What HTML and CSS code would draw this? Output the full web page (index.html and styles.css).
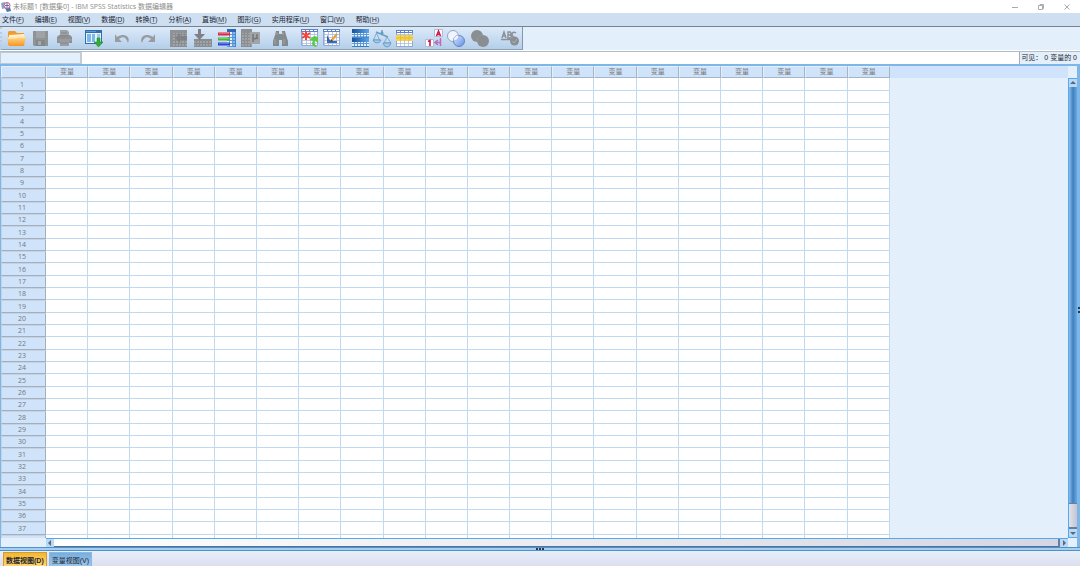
FILE: index.html
```html
<!DOCTYPE html>
<html lang="zh-CN">
<head>
<meta charset="utf-8">
<title>未标题1 [数据集0] - IBM SPSS Statistics 数据编辑器</title>
<link rel="stylesheet" href="styles.css">
</head>
<body>
<svg class="defs" aria-hidden="true">
  <defs>
    <linearGradient id="gold" x1="0" y1="0" x2="0" y2="1"><stop offset="0" stop-color="#ffe09a"/><stop offset="1" stop-color="#f8941d"/></linearGradient>
    <linearGradient id="blue" x1="0" y1="0" x2="1" y2="0"><stop offset="0" stop-color="#1c4f97"/><stop offset="1" stop-color="#5da5e8"/></linearGradient>
    <linearGradient id="ball" x1="0" y1="0" x2="1" y2="1"><stop offset="0" stop-color="#dce9ff"/><stop offset="1" stop-color="#5c8ee8"/></linearGradient>
    <pattern id="cells" width="4" height="3" patternUnits="userSpaceOnUse"><rect width="4" height="3" fill="#fff"/><path d="M0 .5h4M.5 0v3" stroke="#a9bbdd" stroke-width=".8"/></pattern>
    <pattern id="cellsBlue" width="3" height="3" patternUnits="userSpaceOnUse"><rect width="3" height="3" fill="#e4f2ff"/><path d="M0 .5h3M.5 0v3" stroke="#5b9bdb"/></pattern>
    <pattern id="cellsGray" width="3" height="3" patternUnits="userSpaceOnUse"><rect width="3" height="3" fill="#a0a3a6"/><path d="M0 .5h3M.5 0v3" stroke="#8a8d90"/></pattern>
  </defs>
</svg>

<header class="titlebar">
  <svg class="app-icon" viewBox="0 0 11 11" aria-hidden="true"><path d="M0 2l4-1 1 6-4 1z" fill="#8aa6d0"/><path d="M4 7l5-1 1 4-4 1z" fill="#4977b5"/><circle cx="6" cy="4.500" r="3" fill="#fff" stroke="#c8557a"/><path d="M6 2v5M4 4.500h4" stroke="#5273b5"/></svg>
  <h1>未标题1 [数据集0] - IBM SPSS Statistics 数据编辑器</h1>
  <div class="window-buttons">
    <button aria-label="最小化"><svg viewBox="0 0 8 8"><path d="M1 4.500h6"/></svg></button>
    <button aria-label="还原"><svg viewBox="0 0 8 8"><path d="M1.500 2.500h4v4h-4zM3 2.500v-1h3.500v4h-1"/></svg></button>
    <button aria-label="关闭"><svg viewBox="0 0 8 8"><path d="M1.500 1.500l5 5M6.500 1.500l-5 5"/></svg></button>
  </div>
</header>

<nav class="menubar">
  <button>文件(<u>F</u>)</button><button>编辑(<u>E</u>)</button><button>视图(<u>V</u>)</button><button>数据(<u>D</u>)</button><button>转换(<u>T</u>)</button><button>分析(<u>A</u>)</button><button>直销(<u>M</u>)</button><button>图形(<u>G</u>)</button><button>实用程序(<u>U</u>)</button><button>窗口(<u>W</u>)</button><button>帮助(<u>H</u>)</button>
</nav>

<div class="toolbar-row">
  <div class="toolbar" role="toolbar">
    <div class="group">
      <button aria-label="打开"><svg viewBox="0 0 24 22"><path d="M4 17V4l1-1h6l2 2h7v11z" fill="#f39a2b"/><path d="M5 7l15-1v5H5z" fill="#fff3d5"/><path d="M3 9h9l2-1h8l-2 10H5z" fill="url(#gold)"/><path d="M4 10h8l2-1h7" stroke="#fff0c4" fill="none"/></svg></button>
      <button aria-label="保存"><svg viewBox="0 0 24 22"><path d="M5 3h15v15H6l-1-1z" fill="#909396"/><path d="M8 3h9v7H8z" fill="#a0a3a6"/><path d="M8 12h9v6H8z" fill="#84878a"/><path d="M10 13h3v4h-3z" fill="#a6a9ac"/></svg></button>
      <button aria-label="打印"><svg viewBox="0 0 24 22"><path d="M8 2h7l2 2v5H8z" fill="#a0a3a6"/><path d="M7 7h11l2 2v6H5V9z" fill="#8e9194"/><path d="M8 13h9v5H8z" fill="#9b9ea1"/><path d="M8 8h8M8 15h8M9 5h6" stroke="#83868a"/><path d="M6 12h13" stroke="#a3a6a9"/></svg></button>
    </div>
    <div class="group">
      <button aria-label="重新调用对话框"><svg viewBox="0 0 24 22"><path d="M3 2h17v14H3z" fill="#2f6fae"/><path d="M4 5h15v10H4z" fill="#e6f3ff"/><path d="M5 6h4v8H5zM10 6h3v8h-3z" fill="#7db8e8"/><path d="M15 7h3M15 9h3" stroke="#5b97cf"/><path d="M4 3.500h10" stroke="#5a9bd6"/><path d="M15 10h3v4h3l-4.500 5L12 14h3z" fill="#35ad35" stroke="#16851f" stroke-width=".5"/></svg></button>
    </div>
    <div class="group">
      <button aria-label="撤消"><svg viewBox="0 0 24 22"><path d="M3 6v8h7L7 11c4-3 7-2 9 4 3-6-3-11-11-6z" fill="#979ca1"/></svg></button>
      <button aria-label="重做"><svg viewBox="0 0 24 22"><path d="M19 6v8h-7l3-3c-4-3-7-2-9 4-3-6 3-11 11-6z" fill="#979ca1"/></svg></button>
    </div>
    <div class="group">
      <button aria-label="转到个案"><svg viewBox="0 0 24 22"><path d="M4 2h17v17H4z" fill="url(#cellsGray)"/><path d="M4 2h17v3H4zM4 2h3v17H4z" fill="#8f9295"/><path d="M9 10l5-5v3h7v4h-7v3z" fill="#7f8285"/></svg></button>
      <button aria-label="转到变量"><svg viewBox="0 0 24 22"><path d="M4 11h18v8H4z" fill="url(#cellsGray)"/><path d="M4 11h18v2H4z" fill="#8a8d90"/><path d="M8 1h3v5h4l-5.500 6L4 6h4z" fill="#7f8285"/></svg></button>
      <button aria-label="变量"><svg viewBox="0 0 24 22"><path d="M13 1h9v18h-9z" fill="url(#cellsBlue)"/><path d="M13 1h9v3h-9z" fill="#2d68b4"/><path d="M19 4v15h3V4z" fill="#3277c1" fill-opacity=".5"/><path d="M4 6h12" stroke="#e02749" stroke-width="3"/><path d="M4 11h12" stroke="#42ba38" stroke-width="3"/><path d="M4 16h12" stroke="#3146d1" stroke-width="3"/><path d="M5 5.500h10M5 10.500h10M5 15.500h10" stroke="#fff" stroke-opacity=".25"/></svg></button>
      <button aria-label="运行描述统计"><svg viewBox="0 0 24 22"><path d="M3 1h11v18H3z" fill="url(#cellsGray)"/><path d="M3 1h11v4H3z" fill="#8d9093"/><path d="M12 4h10v12H12z" fill="#a2a5a8"/><path d="M15 6v8M15 10q2 2 4-1V6M19 10l1 1" fill="none" stroke="#74777a" stroke-width="1.500"/></svg></button>
    </div>
    <div class="group">
      <button aria-label="查找"><svg viewBox="0 0 24 22"><path d="M8 3h3v3h3V3h3l1 4 2 6v5h-6v-6h-3v6H5v-5l2-6z" fill="#84898e"/><path d="M7 11v5M16 11v5M9 4v3M15 4v3" stroke="#a0a5aa"/></svg></button>
    </div>
    <div class="group tight">
      <button aria-label="插入个案"><svg viewBox="0 0 22 22"><path d="M3 1h17v17H3z" fill="url(#cells)"/><path d="M3.500 1.500h16v16h-16z" fill="none" stroke="#8fa9d8"/><path d="M3 1h17v3H3z" fill="#5a83cc"/><path d="M4 2.500h15" stroke="#fff" stroke-dasharray="3 1"/><path d="M8 3v9M4 5l8 5M12 5l-8 5" stroke="#f0453c" stroke-width="2"/><path d="M11 12l5-4 4 1v6l-3-2c-1 2 0 4 2 6-5 0-6-4-4-6z" fill="#5bcb45"/></svg></button>
      <button aria-label="插入变量"><svg viewBox="0 0 22 22"><path d="M3 1h17v17H3z" fill="url(#cells)"/><path d="M3.500 1.500h16v16h-16z" fill="none" stroke="#8fa9d8"/><path d="M3 1h17v3H3z" fill="#5a83cc"/><path d="M4 2.500h15" stroke="#fff" stroke-dasharray="3 1"/><path d="M7 7v6l4 1z" fill="#3863ab"/><path d="M17 6l-5 6" stroke="#e7a12b" stroke-width="2"/><path d="M7 13h10v2H7z" fill="#3b6dbd"/><path d="M11 11l2 2-3 1z" fill="#53402b"/></svg></button>
    </div>
    <div class="group tight">
      <button aria-label="拆分文件"><svg viewBox="0 0 22 22"><path d="M4 2h17v8H4zM4 11h17v8H4z" fill="url(#cellsBlue)"/><path d="M4 1h17v4H4zM4 10h17v4H4z" fill="url(#blue)"/><path d="M4 18.500h17M4 9h17" stroke="#3f7cbc"/></svg></button>
      <button aria-label="加权个案"><svg viewBox="0 0 22 22"><g fill="none" stroke="#6b9fc4"><path d="M6 4l12 5M12 2v4" stroke-width="1.500"/><path d="M6.500 5L3.500 12h6L6.500 5M17 9l-3 6h7l-4-6" stroke-width=".8"/></g><path d="M3 12h8q-1 3-4 3t-4-3M13 15h8q-1 4-4 4t-4-4" fill="#a5cbe6" stroke="#5b94bf" stroke-width=".8"/><circle cx="12" cy="5" r="1.500" fill="#5f9bc8"/></svg></button>
      <button aria-label="选择个案"><svg viewBox="0 0 22 22"><path d="M4 2h17v17H4z" fill="url(#cells)"/><path d="M4.500 2.500h16v16h-16z" fill="none" stroke="#8fa9d8"/><path d="M4 2h17v3H4z" fill="#5a83cc"/><path d="M5 3.500h15" stroke="#fff" stroke-dasharray="3 1"/><path d="M4 7h17v6H4z" fill="#f4d350"/><path d="M4 10h17M8.500 7v6M13 7v6M17 7v6" stroke="#dcb63c" stroke-width=".7"/></svg></button>
    </div>
    <div class="group">
      <button aria-label="值标签"><svg viewBox="0 0 24 22"><path d="M14.500 1.500h8v7h-8zM5.500 11.500h8v7h-8z" fill="#fff" stroke="#b4bad0"/><path d="M16.500 8l2-5 2 5M17 6.500h3" fill="none" stroke="#d1144d" stroke-width="1.500"/><path d="M8 13.500l2-1V18" fill="none" stroke="#d1144d" stroke-width="1.600"/><path d="M20.500 10v8M20 14.500h-4M18 12l-3 2.500 3 2.500" fill="none" stroke="#b86cbb" stroke-width="1.500"/></svg></button>
      <button aria-label="使用变量集"><svg viewBox="0 0 24 22"><circle cx="9" cy="8" r="5.500" fill="#eef5ff" stroke="#93a5c2"/><circle cx="15" cy="13" r="5.500" fill="url(#ball)" stroke="#6585c0"/><path d="M9.500 13a6 6 0 0 1 5-6q1 5-5 6z" fill="#edf4ff" stroke="#8fa4c8" stroke-width=".5"/></svg></button>
      <button aria-label="显示所有变量"><svg viewBox="0 0 24 22"><circle cx="9" cy="8" r="6" fill="#8b8e91"/><circle cx="15" cy="13" r="6" fill="#8b8e91"/><path d="M9 13a6 6 0 0 1 6-6" fill="none" stroke="#94979a"/></svg></button>
    </div>
    <div class="group">
      <button aria-label="拼写检查"><svg viewBox="0 0 24 22"><path d="M4 10l2-6 2 6M5 8h3M10 4v6h2q3-2 0-3 2-2 0-3zM10 7h2M18 5q-3-2-4 1 0 2 2 3M3 11.500h11" fill="none" stroke="#8a9096" stroke-width="1.400"/><circle cx="16.500" cy="13" r="4.500" fill="#8a8f94"/><path d="M14 13l2 2 3-4" fill="none" stroke="#a9aeb2"/></svg></button>
    </div>
  </div>
</div>

<div class="editbar">
  <output class="cell-name" aria-label="单元格"></output>
  <input class="cell-value" aria-label="单元格值">
  <span class="visible-count">可见： 0 变量的 0</span>
</div>

<main class="editor">
  <div class="sheet-row">
    <div class="sheet">
      <table class="grid">
        <thead><tr id="head"><th class="corner"></th></tr></thead>
        <tbody id="rows"></tbody>
      </table>
    </div>
    <div class="vscroll">
      <button aria-label="向上滚动"><svg viewBox="0 0 8 8"><path d="M1 5l3-3 3 3z"/></svg></button>
      <div class="vthumb"></div>
      <div class="vtrack"></div>
      <button aria-label="向下滚动"><svg viewBox="0 0 8 8"><path d="M1 3l3 3 3-3z"/></svg></button>
    </div>
  </div>
  <div class="hscroll">
    <button aria-label="向左滚动"><svg viewBox="0 0 8 8"><path d="M5 1L2 4l3 3z"/></svg></button>
    <div class="htrack"></div>
    <button aria-label="向右滚动"><svg viewBox="0 0 8 8"><path d="M3 1l3 3-3 3z"/></svg></button>
  </div>
  <span class="side-grip"></span>
</main>

<div class="splitter"><span></span></div>
<footer class="tabs">
  <button class="tab active">数据视图(D)</button>
  <button class="tab">变量视图(V)</button>
</footer>
<script src="script.js"></script>
</body>
</html>
```
FILE: styles.css
```css
* { box-sizing: border-box; }
body {
  margin: 0;
  height: 100vh;
  display: flex;
  flex-direction: column;
  overflow: hidden;
  background: #e3effb;
  color: #1b2430;
  font: 7px/12px "Open Sans", "Noto Sans CJK SC", sans-serif;
}
button {
  margin: 0;
  padding: 0;
  border: 0;
  background: none;
  color: inherit;
  font: inherit;
  white-space: nowrap;
}
svg { display: block; }
.defs { position: absolute; width: 0; height: 0; }

.titlebar {
  display: flex;
  align-items: center;
  flex: none;
  height: 13px;
  padding-left: 1px;
  background: #fff;
  color: #8c8c8c;
}
.app-icon { width: 11px; height: 11px; }
.titlebar h1 {
  margin: 0 0 0 1px;
  font: inherit;
}
.window-buttons { display: flex; margin-left: auto; }
.window-buttons button { width: 26px; display: flex; justify-content: center; }
.window-buttons svg { width: 8px; height: 8px; fill: none; stroke: #aaa; stroke-width: 1; }

.menubar {
  display: flex;
  gap: 11px;
  flex: none;
  height: 14px;
  padding-left: 2px;
  border-bottom: 1px solid #75828f;
  background: #cddff1;
}
.menubar u { text-underline-offset: 1px; text-decoration-color: #7c8896; }

.toolbar-row {
  flex: none;
  height: 25px;
  border-bottom: 1px solid #b3bcc6;
  background: linear-gradient(#e3effb 23px, #fff 23px);
}
.toolbar {
  display: flex;
  gap: 6px;
  width: max-content;
  height: 23px;
  padding: 1px 0 0 2px;
  border-left: 2px dotted #bccde0;
  border-right: 1px solid #8796a8;
  border-bottom: 1px solid #8ba0b6;
  background: linear-gradient(#dceafa, #b4cfea);
}
.group { display: flex; }
.group button, .group svg { width: 24px; height: 22px; }
.tight button, .tight svg { width: 22px; }

.editbar {
  display: flex;
  flex: none;
  height: 12px;
  background: #e3effb;
}
.cell-name {
  width: 82px;
  border: 1px solid #bccad8;
  border-right: 2px solid #c4ccd4;
  background: #e3effb;
}
.cell-value {
  flex: 1;
  min-width: 0;
  padding: 0 2px;
  border: 0;
  background: #fff;
  font: inherit;
}
.visible-count {
  padding: 0 3px 0 1px;
  border-left: 1px solid #a5adb5;
  white-space: pre;
  font-family: "Liberation Sans", "Noto Sans CJK SC", sans-serif;
}

.editor {
  position: relative;
  flex: 1;
  min-height: 0;
  display: flex;
  flex-direction: column;
  border: solid #7db6e8;
  border-width: 2px 3px 0 1px;
}
.sheet-row { flex: 1; min-height: 0; display: flex; }
.sheet {
  flex: 1;
  min-width: 0;
  overflow: hidden;
  background: linear-gradient(#cfe3fb 12px, #e3effb 12px);
}
.grid {
  width: 889px;
  table-layout: fixed;
  border-collapse: separate;
  border-spacing: 0;
  line-height: 10px;
  color: #777;
}
.grid th {
  height: 12px;
  padding: 0;
  border: 1px solid #a9b4c2;
  border-top-color: #e4effc;
  border-left-color: #e4effc;
  background: #cfe3fb;
  font-weight: normal;
  text-align: center;
}
.grid .corner { width: 45px; }
.grid td {
  padding: 0;
  border: 1px solid #c0d9ef;
  border-width: 0 1px 1px 0;
  background: #fff;
}
.grid tbody tr, .grid tbody th { height: 12px; }
.grid tbody th {
  padding-right: 3px;
  border-color: #c6d2e0 #a2afbe #a2afbe #c6d2e0;
}
.grid tbody tr:nth-child(3n+1), .grid tbody tr:nth-child(3n+1) th { height: 13px; }

.vscroll {
  display: flex;
  flex-direction: column;
  width: 9px;
  margin-top: 12px;
  border: 1px solid #55a7f0;
  border-right: 0;
}
.vscroll button, .hscroll button { flex: none; width: 8px; height: 8px; background: #b9d8f8; }
.vscroll svg, .hscroll svg { width: 8px; height: 8px; fill: #5c6876; }
.vthumb { flex: 18; background: linear-gradient(90deg, #8fbde8, #3f80c0 50%, #6aa8e0); }
.vtrack { flex: 1; border: 1px solid #66809c; border-width: 1px 0 2px; background: linear-gradient(90deg, #e2e2ee, #c5c5d2); }
.hscroll {
  display: flex;
  flex: none;
  height: 9px;
  margin: 0 9px 0 45px;
  border-top: 1px solid #55a7f0;
}
.htrack {
  flex: 1;
  border-right: 2px solid #66809c;
  border-bottom: 1px solid #4f7296;
  background: linear-gradient(90deg, #fff, #d6d6e2);
}
.side-grip {
  position: absolute;
  top: 50%;
  right: -3px;
  width: 3px;
  height: 6px;
  border-right: 2px dotted #26394d;
}
.splitter {
  display: flex;
  justify-content: center;
  flex: none;
  height: 4px;
  border: solid #4f91ca;
  border-width: 1px 0;
  background: #a6cef1;
}
.splitter span { width: 8px; border-top: 2px dotted #26394d; }

.tabs {
  display: flex;
  gap: 2px;
  flex: none;
  height: 15px;
  padding: 1px 0 0 3px;
  background: linear-gradient(#e6effa, #dcdfee);
}
.tab {
  padding: 2px 2px 0;
  border: 1px solid #8db8dd;
  border-bottom: 0;
  background: linear-gradient(#78aede, #9cc5eb);
  font-family: "Liberation Sans", "Noto Sans CJK SC", sans-serif;
  line-height: 10px;
}
.tab.active {
  border-color: #d29c33;
  background: linear-gradient(#f5b62f, #ffd773);
  font-weight: bold;
}
```
FILE: script.js
```javascript
const COLUMNS = 20;
const NUMBERED_ROWS = 37;

const head = document.getElementById('head');
for (let i = 0; i < COLUMNS; i++) {
  const th = document.createElement('th');
  th.scope = 'col';
  th.textContent = '变量';
  head.append(th);
}

const rows = document.getElementById('rows');
for (let r = 1; r <= NUMBERED_ROWS + 1; r++) {
  const tr = rows.insertRow();
  const th = document.createElement('th');
  th.scope = 'row';
  th.textContent = r <= NUMBERED_ROWS ? r : '';
  tr.append(th);
  for (let c = 0; c < COLUMNS; c++) tr.insertCell();
}
```
